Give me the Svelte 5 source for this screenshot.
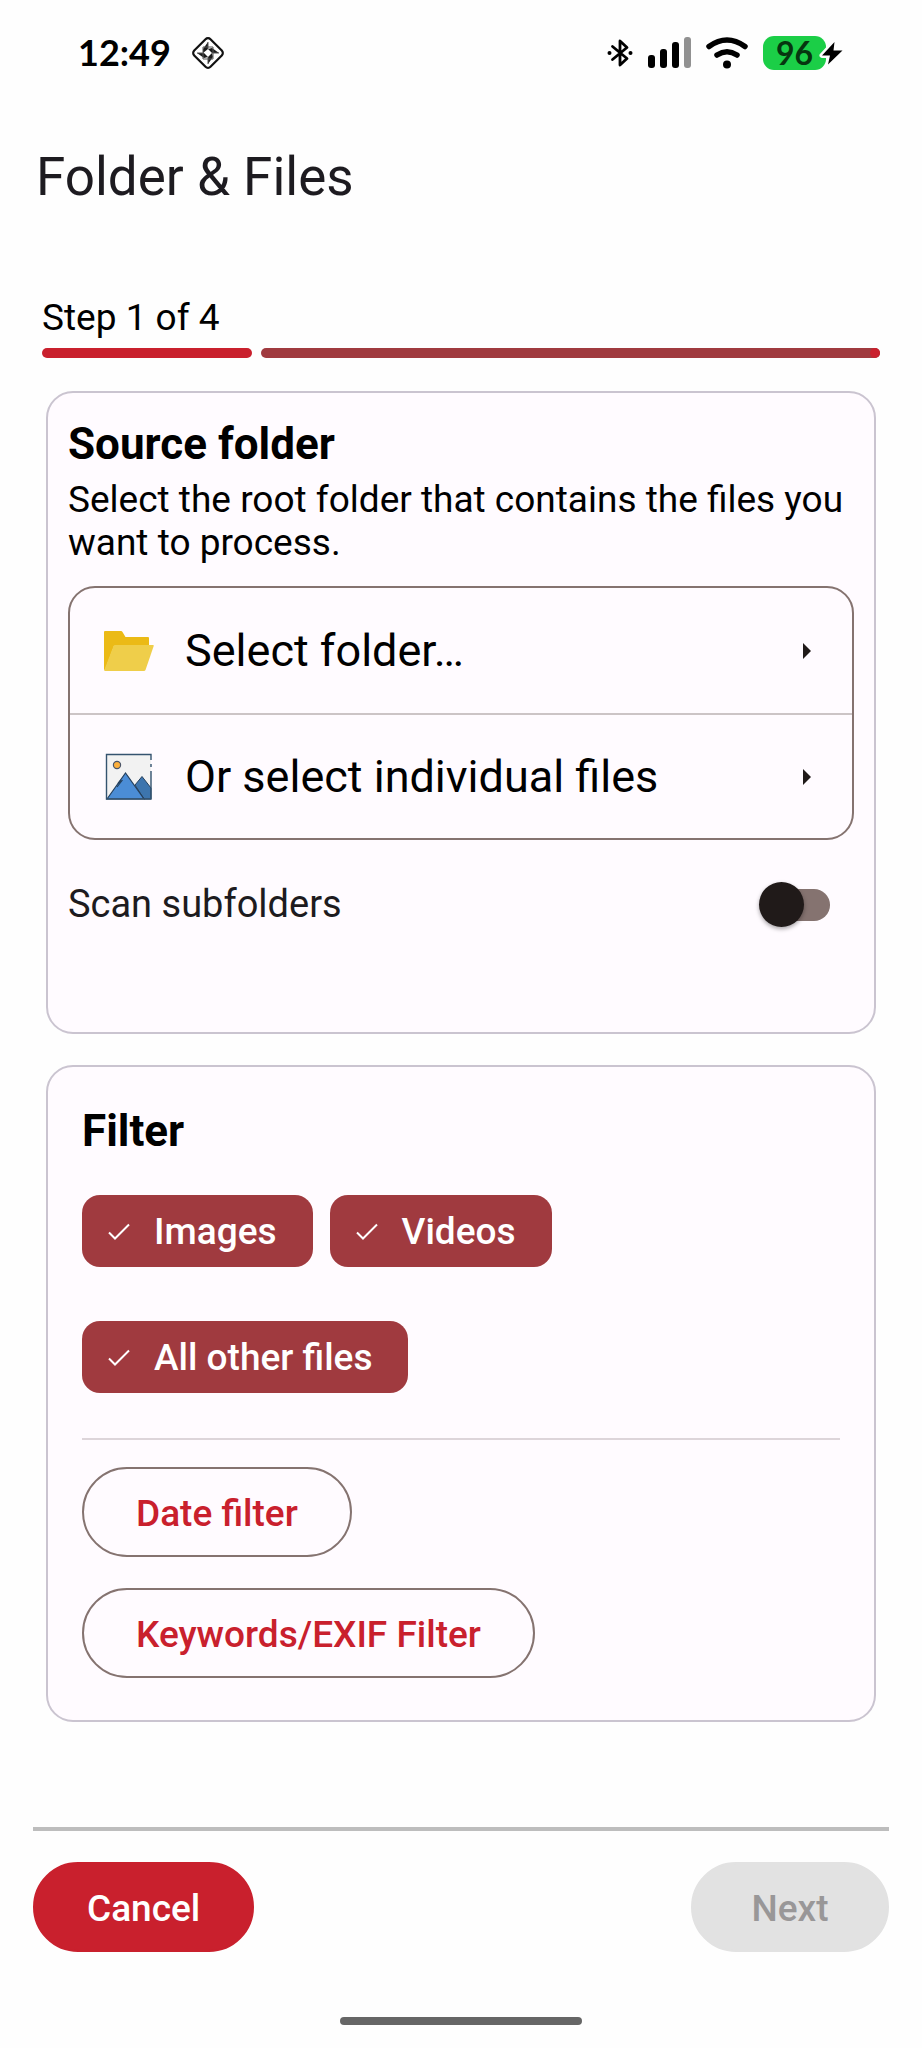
<script lang="ts">
  interface Chip {
    id: string;
    label: string;
    checked: boolean;
  }

  let step = $state(1);
  const totalSteps = 4;

  let scanSubfolders = $state(false);
  let sourceSelected = $state(false);

  let chips = $state<Chip[]>([
    { id: 'images', label: 'Images', checked: true },
    { id: 'videos', label: 'Videos', checked: true },
    { id: 'other', label: 'All other files', checked: true }
  ]);

  let progress = $derived((step / totalSteps) * 100);
</script>

<div class="screen">
  <div class="status-bar">
    <div class="status-group">
      <span class="clock">12:49</span>
      <svg width="34" height="36" viewBox="0 0 34 36" aria-hidden="true">
        <rect x="5.5" y="6.5" width="23" height="23" rx="3.5" transform="rotate(45 17 18)" fill="none" stroke="#111" stroke-width="2.2" />
        <g fill="#1a1a1a">
          <path d="M17 7v7h-5z" />
          <path d="M28 18h-7v-5z" />
          <path d="M17 29v-7h5z" />
          <path d="M6 18h7v5z" />
          <path d="M12 14h5l-5 4z" />
          <path d="M21 13v5l-4-4z" />
          <path d="M22 22h-5l4-4z" />
          <path d="M13 23v-5l4 4z" />
        </g>
        <path d="M17 7v7M28 18h-7M17 29v-7M6 18h7M12 12h10v12H12z" fill="none" stroke="#555" stroke-width="1" />
      </svg>
    </div>
    <div class="status-group right">
      <svg width="26" height="32" viewBox="0 0 26 32" aria-hidden="true">
        <path d="M5.5 9.5L20 21.5L13 28V4L20 10.5L5.5 22.5" fill="none" stroke="#000" stroke-width="2.8" stroke-linejoin="round" stroke-linecap="round" />
        <circle cx="2.5" cy="16" r="2" />
        <circle cx="23.5" cy="16" r="2" />
      </svg>
      <svg width="43" height="32" viewBox="0 0 43 32" aria-hidden="true">
        <rect x="0" y="18" width="7" height="13" rx="3" />
        <rect x="12" y="12" width="7" height="19" rx="3" />
        <rect x="24" y="5" width="7" height="26" rx="3" />
        <rect x="36" y="0" width="7" height="31" rx="3" fill="#919191" />
      </svg>
      <svg width="42" height="32" viewBox="0 0 42 32" aria-hidden="true">
        <path d="M3 9.5Q21-3.5 39 9.5" fill="none" stroke="#000" stroke-width="5.5" stroke-linecap="round" />
        <path d="M11 18Q21 11.5 31 18" fill="none" stroke="#000" stroke-width="5.5" stroke-linecap="round" />
        <circle cx="21" cy="27.5" r="4" />
      </svg>
      <div class="battery">
        <span class="level">96</span>
        <svg class="bolt" width="27" height="30" viewBox="0 0 27 30" aria-hidden="true">
          <path d="M16.5 4L4 17.5H12L10 26.5L24.5 12.5H15.5Z" fill="#000" stroke="#fefefe" stroke-width="5" stroke-linejoin="round" paint-order="stroke" />
        </svg>
      </div>
    </div>
  </div>

  <header class="app-bar">
    <h1>Folder &amp; Files</h1>
  </header>

  <section class="stepper">
    <p id="step-label">Step {step} of {totalSteps}</p>
    <div class="progress" role="progressbar" aria-labelledby="step-label" aria-valuemin="0" aria-valuemax={totalSteps} aria-valuenow={step}>
      <div class="progress-done" style="width: {progress}%"></div>
      <div class="progress-rest"><span class="stop"></span></div>
    </div>
  </section>

  <main>
    <section class="card source">
      <h2>Source folder</h2>
      <p class="hint">Select the root folder that contains the files you want to process.</p>

      <div class="picker">
        <button class="picker-row" onclick={() => (sourceSelected = true)}>
          <svg class="picker-icon" viewBox="0 0 50 50" aria-hidden="true">
            <path d="M0 6Q0 5 1 5H17Q18 5 18.5 6L21.5 11H44Q45 11 45 12V20H10L1 44Q0 44 0 43Z" fill="#ebba16" />
            <path d="M11 19H49Q50 19 49.700 20L41.5 44Q41 45 40 45H1Q0 45 .3 44L9.5 20Q10 19 11 19Z" fill="#efce4a" />
          </svg>
          <span class="picker-text">Select folder…</span>
          <svg class="arrow" width="8" height="16" viewBox="0 0 8 16" aria-hidden="true"><path d="M0 0L8 8L0 16Z" /></svg>
        </button>
        <button class="picker-row" onclick={() => (sourceSelected = true)}>
          <svg class="picker-icon" viewBox="0 0 50 50" aria-hidden="true">
            <path d="M2.5 2.5H47V47H2.5Z" fill="#f2f2f2" />
            <path d="M31 33L38 24.5L47 36V47H40Z" fill="#3d75ae" stroke="#24405d" stroke-width="1" />
            <path d="M3 47L21.5 21L40 47Z" fill="#4b8dd6" stroke="#24405d" stroke-width="1.2" />
            <path d="M13 35L18.5 28M14 31.5L17 28" fill="none" stroke="#24405d" stroke-width="1.2" />
            <circle cx="13" cy="13" r="3.6" fill="#fcaf3c" stroke="#4a5568" stroke-width="1.2" />
            <path d="M47 8V2.5H2.5V47H47V19M47 12V15" fill="none" stroke="#34536f" stroke-width="1.4" />
          </svg>
          <span class="picker-text">Or select individual files</span>
          <svg class="arrow" width="8" height="16" viewBox="0 0 8 16" aria-hidden="true"><path d="M0 0L8 8L0 16Z" /></svg>
        </button>
      </div>

      <label class="switch-row">
        <span>Scan subfolders</span>
        <input class="switch" type="checkbox" bind:checked={scanSubfolders} />
      </label>
    </section>

    <section class="card filter">
      <h2>Filter</h2>
      <div class="chips">
        {#each chips as chip (chip.id)}
          <label class="chip" class:off={!chip.checked}>
            <input type="checkbox" bind:checked={chip.checked} />
            <svg width="22" height="18" viewBox="0 0 22 18" aria-hidden="true">
              <path d="M1 10.5L7 16.5L21 2.5" fill="none" stroke="currentColor" stroke-width="2" />
            </svg>
            <span>{chip.label}</span>
          </label>
        {/each}
      </div>
      <hr />
      <div class="filter-actions">
        <button class="btn outlined">Date filter</button>
        <button class="btn outlined">Keywords/EXIF Filter</button>
      </div>
    </section>
  </main>

  <footer>
    <div class="actions">
      <button class="btn filled">Cancel</button>
      <button class="btn filled" disabled={!sourceSelected} onclick={() => step++}>Next</button>
    </div>
    <div class="home-indicator"></div>
  </footer>
</div>

<style>
  :global(body) {
    margin: 0;
    background: #fefefe;
  }

  .screen {
    display: flex;
    flex-direction: column;
    box-sizing: border-box;
    min-height: 100vh;
    font-family: Roboto, 'Noto Sans', sans-serif;
    font-size: 37px;
    line-height: 43px;
    color: #000;
  }

  h1,
  h2,
  p {
    margin: 0;
  }

  button {
    font: inherit;
    cursor: pointer;
  }

  .status-bar {
    display: flex;
    justify-content: space-between;
    align-items: center;
    height: 105px;
    padding: 0 78px;
  }

  .status-group {
    display: flex;
    align-items: center;
    gap: 20px;
  }

  .status-group.right {
    gap: 15px;
  }

  .clock {
    font-family: Lato, sans-serif;
    font-size: 36px;
    font-weight: 700;
  }

  .battery {
    position: relative;
    display: flex;
    justify-content: center;
    align-items: center;
    width: 63px;
    height: 34px;
    margin-right: 18px;
    border-radius: 11px;
    background: #1bce47;
  }

  .level {
    font-family: Lato, sans-serif;
    font-size: 32px;
    font-weight: 700;
    color: #06350f;
  }

  .bolt {
    position: absolute;
    top: 2px;
    right: -19px;
  }

  .app-bar {
    padding: 40px 36px 0;
  }

  h1 {
    font-size: 53px;
    font-weight: 400;
    line-height: 64px;
    color: #1d1b20;
  }

  .stepper {
    padding: 87px 42px 0;
  }

  .progress {
    display: flex;
    gap: 9px;
    height: 10px;
    margin-top: 9px;
  }

  .progress-done,
  .progress-rest {
    border-radius: 5px;
  }

  .progress-done {
    background: #c9202d;
  }

  .progress-rest {
    display: flex;
    flex: 1;
    justify-content: flex-end;
    background: #a03a3f;
  }

  .stop {
    width: 10px;
    height: 10px;
    border-radius: 50%;
    background: #c9202d;
  }

  main {
    display: flex;
    flex-direction: column;
    gap: 31px;
    padding: 33px 46px 0;
  }

  .card {
    border: 2px solid #cac4d0;
    border-radius: 27px;
    background: #fffbff;
  }

  .source {
    padding: 24px 20px 106px;
  }

  h2 {
    font-size: 44px;
    font-weight: 700;
    line-height: 54px;
  }

  .hint {
    margin-top: 7px;
  }

  .picker {
    margin-top: 22px;
    border: 2px solid #857370;
    border-radius: 27px;
    overflow: hidden;
  }

  .picker-row {
    display: flex;
    align-items: center;
    width: 100%;
    height: 125px;
    padding: 0 41px 0 34px;
    border: none;
    background: none;
    font-size: 45px;
    line-height: 54px;
    text-align: left;
    color: #000;
  }

  .picker-row + .picker-row {
    border-top: 2px solid #ccc4c6;
  }

  .picker-icon {
    flex-shrink: 0;
    width: 50px;
    height: 50px;
  }

  .picker-text {
    flex: 1;
    margin-left: 31px;
  }

  .arrow {
    fill: #201a19;
  }

  .switch-row {
    display: flex;
    justify-content: space-between;
    align-items: center;
    margin-top: 43px;
    padding-right: 24px;
    font-size: 38px;
    color: #1d1b20;
  }

  .switch {
    position: relative;
    appearance: none;
    width: 64px;
    height: 32px;
    margin: 0;
    border-radius: 16px;
    background: #857370;
    cursor: pointer;
  }

  .switch::before {
    content: '';
    position: absolute;
    top: -7px;
    left: -7px;
    width: 45px;
    height: 45px;
    border-radius: 50%;
    background: #201a19;
    box-shadow: 0 2px 4px rgba(0, 0, 0, 0.35);
    transition: left 0.2s;
  }

  .switch:checked::before {
    left: 26px;
    background: #c9202d;
  }

  .filter {
    padding: 37px 34px 42px;
  }

  .chips {
    display: flex;
    flex-wrap: wrap;
    gap: 54px 17px;
    margin-top: 37px;
  }

  .chip {
    display: flex;
    align-items: center;
    height: 72px;
    padding: 0 36px 0 26px;
    border-radius: 18px;
    background: #a03a3f;
    font-weight: 500;
    color: #fff;
    cursor: pointer;
  }

  .chip input {
    appearance: none;
    width: 0;
    height: 0;
    margin: 0;
  }

  .chip span {
    margin-left: 24px;
  }

  .chip.off svg {
    visibility: hidden;
  }

  hr {
    margin: 45px 0 27px;
    border: none;
    border-top: 2px solid #ddd5da;
  }

  .filter-actions {
    display: flex;
    flex-direction: column;
    align-items: flex-start;
    gap: 31px;
  }

  .btn {
    box-sizing: border-box;
    min-width: 198px;
    height: 90px;
    padding: 3px 52px 0;
    border: 2px solid transparent;
    border-radius: 45px;
    font-weight: 500;
  }

  .outlined {
    border-color: #857370;
    background: none;
    color: #c9202d;
  }

  .filled {
    border-color: #c9202d;
    background: #c9202d;
    color: #fff;
  }

  .filled:disabled {
    border-color: #e2e2e2;
    background: #e2e2e2;
    color: #999798;
    cursor: default;
  }

  footer {
    margin-top: auto;
    padding: 0 33px 23px;
  }

  .actions {
    display: flex;
    justify-content: space-between;
    padding-top: 31px;
    border-top: 4px solid #bdbdbd;
  }

  .home-indicator {
    width: 242px;
    height: 8px;
    margin: 65px auto 0;
    border-radius: 4px;
    background: #666;
  }
</style>
